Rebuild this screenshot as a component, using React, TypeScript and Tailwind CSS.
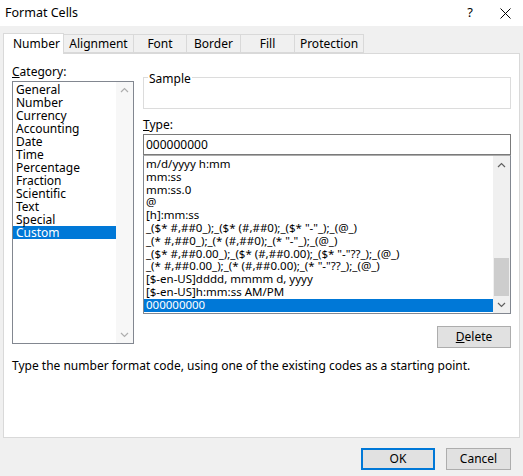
const font = { fontFamily: '"Noto Sans", "Open Sans", sans-serif' };

const categories = ['General', 'Number', 'Currency', 'Accounting', 'Date', 'Time', 'Percentage', 'Fraction', 'Scientific', 'Text', 'Special', 'Custom'];
const types = [
  'm/d/yyyy h:mm',
  'mm:ss',
  'mm:ss.0',
  '@',
  '[h]:mm:ss',
  '_($* #,##0_);_($* (#,##0);_($* "-"_);_(@_)',
  '_(* #,##0_);_(* (#,##0);_(* "-"_);_(@_)',
  '_($* #,##0.00_);_($* (#,##0.00);_($* "-"??_);_(@_)',
  '_(* #,##0.00_);_(* (#,##0.00);_(* "-"??_);_(@_)',
  '[$-en-US]dddd, mmmm d, yyyy',
  '[$-en-US]h:mm:ss AM/PM',
  '000000000',
];
const tabs = ['Alignment', 'Font', 'Border', 'Fill', 'Protection'];
const tabW = [70, 53, 54, 54, 69];

function Chevron({ up, color = '#606060' }: { up?: boolean; color?: string }) {
  return (
    <svg width="9" height="6" viewBox="0 0 9 6">
      <path d={up ? 'M1 5 L4.5 1.5 L8 5' : 'M1 1 L4.5 4.5 L8 1'} fill="none" stroke={color} strokeWidth="1.2" />
    </svg>
  );
}

export default function App() {
  return (
    <div className="w-[523px] h-[476px] bg-[#f0f0f0] text-[12px] text-black flex flex-col overflow-hidden" style={font}>
      <div className="h-[26px] bg-white flex items-center pl-[5px] pr-[10px] text-[12.5px]">
        <span className="flex-1">Format Cells</span>
        <span className="w-[20px] text-center mr-[20px] text-[13px]">?</span>
        <svg width="11" height="11" viewBox="0 0 11 11" className="mr-[2px]"><path d="M0.5 0.5 L10.5 10.5 M10.5 0.5 L0.5 10.5" stroke="#000" strokeWidth="1" /></svg>
      </div>
      <div className="flex items-end h-[27px] pl-[3px] pt-[7px]">
        <div className="w-[61px] h-[21px] bg-white border border-b-0 border-[#d9d9d9] pl-[9px] pt-[1px] relative z-10 -mb-px">Number</div>
        {tabs.map((t, i) => (
          <div key={t} className="h-[19px] bg-[#f0f0f0] border border-l-0 border-[#d9d9d9] flex items-center justify-center" style={{ width: tabW[i] }}>{t}</div>
        ))}
      </div>
      <div className="mx-[3px] w-[517px] h-[385px] bg-white border border-[#d9d9d9] relative">
        <div className="flex pl-[8px] pt-[9px]">
          <div className="w-[122px]">
            <div className="h-[18px]"><u>C</u>ategory:</div>
            <div className="h-[263px] border border-[#828790] flex">
              <div className="flex-1 pl-[3px] pt-[1px] leading-[13px]">
                {categories.map((c) => (
                  <div key={c} className={c === 'Custom' ? 'h-[13px] bg-[#0078d7] text-white -ml-[3px] pl-[3px]' : 'h-[13px]'}>{c}</div>
                ))}
              </div>
              <div className="w-[17px] bg-[#f0f0f0] flex flex-col justify-between items-center py-[5px] opacity-50">
                <Chevron up /><Chevron />
              </div>
            </div>
          </div>
          <div className="ml-[9px] w-[368px]">
            <div className="mt-[14px] h-[32px] border border-[#dcdcdc] relative">
              <span className="absolute -top-[8px] left-[4px] bg-white px-[1px]">Sample</span>
            </div>
            <div className="mt-[7px] h-[18px]"><u>T</u>ype:</div>
            <div className="h-[21px] border border-[#7a7a7a] flex items-center pl-[2px]">000000000</div>
            <div className="h-[159px] border border-[#828790] border-t-[#adadad] flex">
              <div className="flex-1 pt-[2px] leading-[12.8px] text-[11.5px] whitespace-nowrap overflow-hidden">
                {types.map((t) => (
                  <div key={t} className={t === '000000000' ? 'h-[12.8px] bg-[#0078d7] text-white pl-[2px]' : 'h-[12.8px] pl-[2px]'}>{t}</div>
                ))}
              </div>
              <div className="w-[17px] bg-[#f0f0f0] flex flex-col items-center">
                <div className="h-[17px] flex items-center"><Chevron up /></div>
                <div className="flex-1 w-full relative">
                  <div className="absolute left-[1px] right-[1px] bottom-0 h-[38px] bg-[#cdcdcd]" />
                </div>
                <div className="h-[17px] flex items-center"><Chevron /></div>
              </div>
            </div>
            <div className="flex justify-end mt-[12px]">
              <div className="w-[74px] h-[22px] bg-[#e1e1e1] border border-[#adadad] flex items-center justify-center"><span><u>D</u>elete</span></div>
            </div>
          </div>
        </div>
        <div className="pl-[8px] mt-[9px]">Type the number format code, using one of the existing codes as a starting point.</div>
      </div>
      <div className="flex justify-end gap-[11px] pr-[12px] mt-[10px]">
        <div className="w-[74px] h-[22px] bg-[#e1e1e1] border-2 border-[#0078d7] flex items-center justify-center">OK</div>
        <div className="w-[65px] h-[22px] bg-[#e1e1e1] border border-[#adadad] flex items-center justify-center">Cancel</div>
      </div>
    </div>
  );
}
